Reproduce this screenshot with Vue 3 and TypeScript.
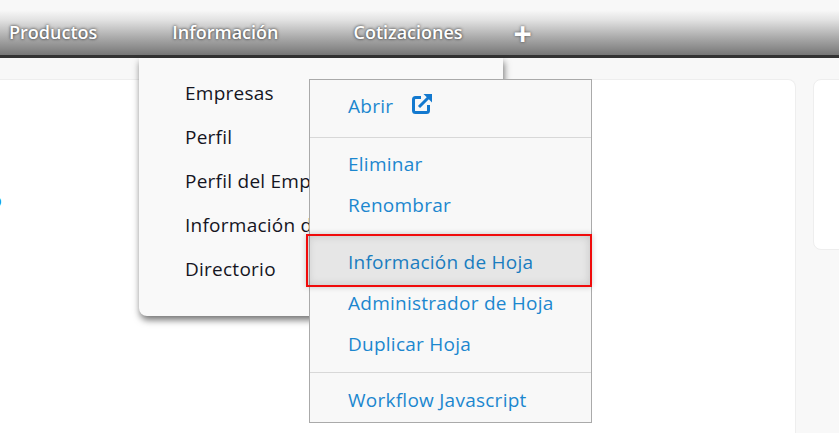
<script setup lang="ts">
const nav: string[] = ['Productos', 'Información', 'Cotizaciones']
const dropdown: string[] = ['Empresas', 'Perfil', 'Perfil del Empleado', 'Información de Empresa', 'Directorio']
</script>

<template>
  <div class="page">
    <header class="topbar">
      <a v-for="n in nav" :key="n" class="nav-link">{{ n }}</a>
      <span class="plus">+</span>
    </header>
    <main class="content">
      <section class="card card-main"><span class="cut">o</span></section>
      <section class="card card-side"></section>
    </main>

    <div class="dropdown">
      <div v-for="d in dropdown" :key="d" class="drop-item">{{ d }}</div>
    </div>

    <div class="context">
      <div class="ctx-item ctx-open">
        Abrir
        <svg class="ext" viewBox="0 0 22 22" width="22" height="22" aria-hidden="true">
          <path d="M10 4.5H4.5A2 2 0 0 0 2.5 6.5V17.5A2 2 0 0 0 4.5 19.5H15.5A2 2 0 0 0 17.5 17.5V12" fill="none" stroke="#1379cf" stroke-width="3"/>
          <path d="M8 14L18 4" fill="none" stroke="#1379cf" stroke-width="3"/>
          <path d="M12.5 1H21V9.5Z" fill="#1379cf"/>
        </svg>
      </div>
      <hr class="sep" />
      <div class="ctx-item">Eliminar</div>
      <div class="ctx-item">Renombrar</div>
      <div class="ctx-item ctx-active">Información de Hoja</div>
      <div class="ctx-item">Administrador de Hoja</div>
      <div class="ctx-item">Duplicar Hoja</div>
      <hr class="sep sep-low" />
      <div class="ctx-item">Workflow Javascript</div>
    </div>
    <div class="highlight"></div>
  </div>
</template>

<style>
html, body { margin: 0; overflow: hidden; }
</style>

<style scoped>
.page {
  position: relative;
  width: 839px;
  height: 433px;
  overflow: hidden;
  background: #f8f8f8;
  font-family: "Open Sans", "Liberation Sans", sans-serif;
}
.topbar {
  height: 55px;
  box-sizing: content-box;
  border-bottom: 3px solid #333;
  background: linear-gradient(to bottom, #f8f8f8 0, #f8f8f8 10px, #e2e2e2 20px, #a9a9a9 38px, #777 55px);
  display: flex;
  align-items: flex-start;
  padding-left: 9px;
}
.nav-link {
  margin-top: 20px;
  font-size: 18px;
  line-height: 24px;
  font-weight: 600;
  color: #fff;
  text-shadow: 0 0 3px rgba(0, 0, 0, 0.85);
  margin-right: 75px;
}
.plus {
  margin-left: -24px;
  margin-top: 16px;
  font-size: 32px;
  line-height: 36px;
  font-weight: 700;
  color: #fff;
  text-shadow: 0 0 3px rgba(0, 0, 0, 0.6);
}
.content {
  display: flex;
  align-items: flex-start;
  gap: 17px;
  padding-top: 21px;
}
.card {
  flex: none;
  box-sizing: border-box;
  background: #fff;
  border: 1px solid #eee;
}
.card-main {
  position: relative;
  width: 796px;
  height: 400px;
  border-left: 0;
  border-radius: 0 8px 0 0;
}
.cut {
  position: absolute;
  left: -9px;
  top: 108px;
  font-size: 18px;
  line-height: 24px;
  color: #0e8fe0;
}
.card-side {
  width: 60px;
  height: 171px;
  border-radius: 8px;
}
.dropdown {
  position: absolute;
  left: 139px;
  top: 58px;
  box-sizing: border-box;
  width: 364px;
  height: 258px;
  padding-top: 14px;
  background: #f9f9f9;
  border-radius: 0 0 8px 8px;
  box-shadow: 1px 4px 7px rgba(0, 0, 0, 0.55);
}
.drop-item {
  padding-left: 46px;
  height: 44px;
  line-height: 43px;
  font-size: 19px;
  letter-spacing: 0.25px;
  color: #15151f;
  white-space: nowrap;
}
.context {
  position: absolute;
  left: 309px;
  top: 79px;
  box-sizing: border-box;
  width: 283px;
  height: 344px;
  padding-top: 6px;
  background: #f8f8f8;
  border: 1px solid #aaa;
}
.ctx-item {
  height: 41px;
  line-height: 40px;
  padding-left: 38px;
  font-size: 19px;
  letter-spacing: 0.25px;
  color: #1c87cf;
  white-space: nowrap;
}
.ctx-open {
  display: flex;
  align-items: center;
  gap: 18px;
  line-height: 37px;
}
.ext { margin-top: -5px; }
.sep {
  margin: 10px 0 6px;
  border: 0;
  border-top: 1px solid #d8d8d8;
}
.ctx-active {
  margin-top: 16px;
  height: 41px;
  line-height: 41px;
}
.sep-low { margin: 7px 0 7px; }
.highlight {
  position: absolute;
  left: 306px;
  top: 234px;
  box-sizing: border-box;
  width: 286px;
  height: 53px;
  border: 2px solid #f00b0b;
  background: rgba(0, 0, 0, 0.07);
  box-shadow: inset 0 0 8px rgba(0, 0, 0, 0.15), 0 0 6px rgba(0, 0, 0, 0.2);
}
</style>
